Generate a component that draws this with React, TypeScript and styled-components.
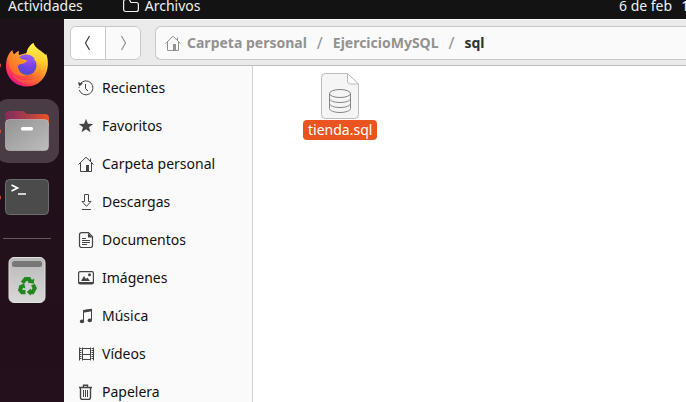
import React from "react";
import styled, { createGlobalStyle } from "styled-components";

const GlobalStyle = createGlobalStyle`
  * { box-sizing: border-box; }
  html, body, #root { height: 100%; }
  body {
    margin: 0;
    overflow: hidden;
    font-family: "Noto Sans", "Open Sans", sans-serif;
    font-size: 14px;
    line-height: 20px;
    color: #111;
  }
  button, a { font: inherit; color: inherit; text-decoration: none; }
  ul, ol { list-style: none; margin: 0; padding: 0; }
  svg { display: block; flex: none; }
`;

const Desktop = styled.div`
  display: flex;
  flex-direction: column;
  height: 100%;
  background: #210f1a;
`;

const TopBar = styled.header`
  display: flex;
  align-items: flex-end;
  flex: none;
  height: 19px;
  padding: 0 0 3px 8px;
  background: #131313;
  color: #f0f0f0;
  white-space: nowrap;
`;

const TopButton = styled.button`
  display: flex;
  align-items: center;
  gap: 6px;
  padding: 0;
  border: 0;
  background: none;
`;

const AppMenu = styled(TopButton)`
  margin-left: 40px;
`;

const Clock = styled(TopButton)`
  gap: 9px;
  width: 67px;
  margin-left: auto;
`;

const Work = styled.div`
  display: flex;
  flex: 1;
  min-height: 0;
`;

const Dock = styled.nav`
  display: flex;
  flex: none;
  width: 64px;
  padding-top: 14px;
  overflow: hidden;
  background: linear-gradient(#1e111a, #240f1c);
`;

const DockList = styled.ul`
  display: flex;
  flex-direction: column;
  gap: 2px;
  width: 64px;
  margin-left: -5px;
`;

const DockItem = styled.li`
  position: relative;
`;

const DockButton = styled.button<{ $active?: boolean }>`
  display: grid;
  place-items: center;
  width: 64px;
  height: 64px;
  padding: 0;
  border: 0;
  border-radius: 13px;
  background: ${(p) => (p.$active ? "#4a3c45" : "transparent")};
`;

const RunningDot = styled.span`
  position: absolute;
  left: 1px;
  top: 50%;
  width: 5px;
  height: 5px;
  margin-top: -2px;
  border-radius: 50%;
  background: #d9501f;
`;

const DockSeparator = styled.li`
  height: 1px;
  margin: 7px 8px;
  background: #65575f;
`;

const Window = styled.main`
  display: flex;
  flex-direction: column;
  flex: 1;
  min-width: 0;
  background: #fff;
`;

const HeaderBar = styled.div`
  display: flex;
  align-items: center;
  flex: none;
  gap: 14px;
  height: 47px;
  padding-left: 6px;
  border-top: 1px solid #fafafa;
  border-bottom: 1px solid #bdbdbd;
  background: #ebebeb;
`;

const NavGroup = styled.div`
  display: flex;
  flex: none;
  height: 34px;
  border: 1px solid #c8c8c8;
  border-radius: 6px;
  overflow: hidden;
`;

const NavButton = styled.button`
  display: grid;
  place-items: center;
  width: 34px;
  padding: 0;
  border: 0;
  background: #fff;
  color: #3d3d3d;

  & + & { width: 35px; border-left: 1px solid #c8c8c8; }
  &:disabled { background: #fafafa; color: #929292; }
`;

const PathBar = styled.nav`
  flex: 1;
  min-width: 0;
  height: 34px;
  padding-left: 9px;
  border: 1px solid #c8c8c8;
  border-right: 0;
  border-radius: 6px 0 0 6px;
  background: #fafafa;
`;

const Crumbs = styled.ol`
  display: flex;
  align-items: center;
  height: 100%;
  font-weight: 700;
  color: #929292;
  white-space: nowrap;
`;

const Crumb = styled.li`
  & + &::before {
    content: "/";
    margin: 0 10px;
    font-size: 16px;
    font-weight: 400;
    color: #929292;
  }
  display: flex;
  align-items: center;
`;

const CrumbLink = styled.a`
  display: flex;
  align-items: center;
  gap: 6px;
  &[aria-current] { color: #303030; }
`;

const Body = styled.div`
  display: flex;
  flex: 1;
  min-height: 0;
`;

const Sidebar = styled.nav`
  flex: none;
  width: 189px;
  padding-top: 3px;
  overflow: hidden;
  border-right: 1px solid #d2d2d2;
  background: #fafafa;
`;

const PlaceLink = styled.a`
  display: flex;
  align-items: center;
  gap: 8px;
  height: 38px;
  padding-left: 14px;
  & > svg { color: #444; }
`;

const Files = styled.ul`
  display: flex;
  flex: 1;
  align-items: flex-start;
  padding: 6px 0 0 50px;
  background: #fff;
`;

const FileButton = styled.button`
  display: flex;
  flex-direction: column;
  align-items: center;
  padding: 0;
  border: 0;
  background: none;
`;

const FileName = styled.span`
  padding: 0 5px;
  border-radius: 4px;
  background: #e95420;
  color: #fff;
`;

const Icon = ({ children }: { children: React.ReactNode }) => (
  <svg width="16" height="16" viewBox="0 0 16 16" fill="none" stroke="currentColor" aria-hidden="true">
    {children}
  </svg>
);

const HomeIcon = () => (
  <Icon>
    <path d="M.5 8.5 8 1.2l7.5 7.3M2.5 7v8.5h11V7M12.5 5V2.5" />
    <path d="M8 9h3v6H8z" fill="currentColor" stroke="none" />
  </Icon>
);
const RecentIcon = () => (
  <Icon>
    <path d="M2 4.2A7 7 0 1 1 1.3 10M7.5 4v4.5L10 11" />
    <path d="M0 2.2 1.2 6.5 5 3.6z" fill="currentColor" stroke="none" />
    <path d="M1 7v2" strokeDasharray="1 1" />
  </Icon>
);
const StarIcon = () => (
  <Icon>
    <path d="m8 .8 1.900 4.900 5.300.2-4.200 3.300 1.500 5L8 11.300 3.500 14.200l1.500-5L.8 5.900l5.300-.2z" fill="currentColor" stroke="none" />
  </Icon>
);
const DownloadIcon = () => (
  <Icon>
    <path d="M6.5.5h4v7H13L8.5 12.3 4 7.5h2.5zM4 15.5h9" />
  </Icon>
);
const DocumentIcon = () => (
  <Icon>
    <path d="M3.5.7h7l4 4v8.8a2 2 0 0 1-2 2h-9a2 2 0 0 1-2-2V2.7a2 2 0 0 1 2-2z" strokeWidth="1.2" />
    <path d="M10 1v4.5h4.5z" fill="currentColor" stroke="none" />
    <path d="M4 6.5h4M4 8.5h8M4 10.5h8M4 12.5h5" />
  </Icon>
);
const ImageIcon = () => (
  <Icon>
    <rect x=".6" y="1.6" width="14.8" height="12.3" rx="1.5" strokeWidth="1.2" />
    <path d="M1 12h14v2H1zM3 11l3-5 2 3 1.4-1.5L12 11z" fill="currentColor" stroke="none" />
    <circle cx="11.5" cy="4.7" r="1.5" fill="currentColor" stroke="none" />
  </Icon>
);
const MusicIcon = () => (
  <Icon>
    <path d="M5.500 13V2.600l8-1.300V12" />
    <path d="M5 2.200 14 .8v2.500L5 4.700z" fill="currentColor" stroke="none" />
    <ellipse cx="4" cy="13.400" rx="2.200" ry="1.800" fill="currentColor" stroke="none" />
    <ellipse cx="11.800" cy="12.400" rx="2.200" ry="1.800" fill="currentColor" stroke="none" />
  </Icon>
);
const VideoIcon = () => (
  <Icon>
    <path d="M2.500 2v12M14.500 2v12" strokeWidth="2" strokeDasharray="1 1" />
    <path d="M1.500 1.500v13M4.500 1.500v13M12.500 1.500v13M15.500 1.500v13" />
    <path d="M4 2.500h9M4 8.500h9M4 13.500h9" />
  </Icon>
);
const TrashIcon = () => (
  <Icon>
    <path d="M1 3.500h13M5.500 3V1.200h4V3M2.500 4v9.500a2 2 0 0 0 2 2h6a2 2 0 0 0 2-2V4" strokeWidth="1.400" />
    <path d="M5.500 6v7M7.500 6v7M9.500 6v7" />
  </Icon>
);

const FirefoxLogo = () => (
  <svg width="44" height="46" viewBox="0 0 44 46" aria-hidden="true">
    <defs>
      <linearGradient id="ffBody" x1=".85" y1=".1" x2=".25" y2=".95">
        <stop offset="0" stopColor="#fff44f" />
        <stop offset=".35" stopColor="#ffb52e" />
        <stop offset=".65" stopColor="#ff6b2b" />
        <stop offset=".85" stopColor="#ff3750" />
        <stop offset="1" stopColor="#e31587" />
      </linearGradient>
      <radialGradient id="ffGlobe" cx=".6" cy=".2" r=".8">
        <stop offset="0" stopColor="#a052eb" />
        <stop offset=".5" stopColor="#7542e5" />
        <stop offset="1" stopColor="#4b4ccc" />
      </radialGradient>
      <linearGradient id="ffTail" x1="0" y1="0" x2="0" y2="1">
        <stop offset="0" stopColor="#fff44f" />
        <stop offset=".5" stopColor="#ffd22f" />
        <stop offset="1" stopColor="#ff8a27" />
      </linearGradient>
      <linearGradient id="ffHead" x1="0" y1="1" x2="1" y2="0">
        <stop offset="0" stopColor="#ff5a36" />
        <stop offset=".6" stopColor="#ff8a27" />
        <stop offset="1" stopColor="#ffae2b" />
      </linearGradient>
    </defs>
    <path d="M4 12c1-2 2.500-3.200 3.500-4 0 2 .6 3.300 1.600 4.200C11 10.700 12 9.500 14 9c-.4 1.800-.4 3 .2 4l7.300-2C22 7 25 3 28.500 1c1 5 9 8 12 12l.6-1.500c2.800 7 2.300 16-1.200 22C36 40.500 30 44.500 22 44.500 10 44.500 1 35.500 1 24c0-5 1-9 3-12z" fill="url(#ffBody)" />
    <path d="M21.500 14C22 8 25 3 28.500 1c.5 5 7 8 10.500 14 4 7 2 15-3 20 1-7-1-14-7-18z" fill="url(#ffTail)" />
    <circle cx="22" cy="23.500" r="9.500" fill="url(#ffGlobe)" />
    <path d="M13.500 16C17 12 25 10.500 30 17l-2-.3c2 1.800 2.700 4 2.300 6-2-4-5-6.700-8.300-7.200z" fill="#9059ff" />
    <path d="M3 14c3-2 7-2 10 1 2.500 2.500 6 2 9 3.400-.3 2-3.500 3.100-6 3.600-2.800.5-3.200 1.500-3 3.500.5 4 4 7 8.500 8-7 2-16-2-17-10z" fill="url(#ffHead)" />
    <path d="M7 31c4 6 14 10 22 5 4-2.500 6-7 5.500-11 3 7-1 14-7 16S11 41 7 31z" fill="#ff7139" opacity=".45" />
  </svg>
);

const FilesLogo = () => (
  <svg width="44" height="42" viewBox="0 0 44 42" aria-hidden="true">
    <defs>
      <linearGradient id="folderBack"><stop offset="0" stopColor="#802d5c" /><stop offset=".5" stopColor="#ad3d49" /><stop offset="1" stopColor="#e95420" /></linearGradient>
      <linearGradient id="folderFront" x1="0" y1="0" x2="1" y2="1"><stop offset="0" stopColor="#939393" /><stop offset="1" stopColor="#bdbdbd" /></linearGradient>
    </defs>
    <path d="M0 16V5a4 4 0 0 1 4-4h14l4 3h18a4 4 0 0 1 4 4v8z" fill="url(#folderBack)" />
    <rect x=".5" y="9.500" width="43" height="31" rx="4" fill="url(#folderFront)" stroke="#c7c2c4" strokeOpacity=".6" />
    <rect x="16" y="17" width="12" height="3.500" rx="1.500" fill="#fff" />
  </svg>
);

const TerminalLogo = () => (
  <svg width="44" height="36" viewBox="0 0 44 36" fill="none" aria-hidden="true">
    <rect x=".5" y=".5" width="43" height="35" rx="4" fill="#4b4b4b" stroke="#6d6d6d" />
    <path d="m6.500 6 6 3-6 3M13 15h8" stroke="#fff" strokeWidth="1.700" />
  </svg>
);

const BinLogo = () => (
  <svg width="38" height="46" viewBox="0 0 38 46" fill="none" aria-hidden="true">
    <defs>
      <linearGradient id="bin" x1="0" y1="0" x2="0" y2="1"><stop offset="0" stopColor="#b9b9b9" /><stop offset="1" stopColor="#d8d8d8" /></linearGradient>
    </defs>
    <rect x="1" y=".5" width="36" height="45" rx="5" fill="url(#bin)" stroke="#e2e2e2" />
    <rect x="4" y="4" width="30" height="6" rx="2.500" fill="#777" />
    <g transform="translate(2.500 3) scale(.88)">
      <g stroke="#23851f" strokeWidth="4.600">
        <path d="m13.500 26 3.500-4.500h4l2 3.500" />
        <path d="M12.500 29.500 11 34l2 2.500h4" />
        <path d="m25.500 28 2 4-2.500 4.500h-3" />
      </g>
      <g fill="#23851f">
        <path d="m19.500 25.500 7 1.500.5-6z" />
        <path d="m9 29.500 6.500-3 1.500 6z" />
        <path d="m18.500 36.500 4.500-4v8z" />
      </g>
    </g>
  </svg>
);

const SqlFileIcon = () => (
  <svg width="38" height="48" viewBox="0 0 38 48" fill="none" aria-hidden="true">
    <path d="M5 1.500h21.500l11 10.500v30.500a4 4 0 0 1-4 4H4.500a4 4 0 0 1-4-4v-37a4 4 0 0 1 4-4z" fill="#f5f5f5" stroke="#bcbcbc" />
    <path d="M26.500 1.500V9a3 3 0 0 0 3 3h8z" fill="#fff" stroke="#bcbcbc" />
    <g stroke="#858585">
      <ellipse cx="19" cy="21.500" rx="10.500" ry="4" />
      <path d="M8.500 21.500v15c0 2.200 4.700 4 10.500 4s10.500-1.800 10.500-4v-15M8.500 26.500c0 2.200 4.700 4 10.500 4s10.500-1.800 10.500-4M8.500 31.500c0 2.200 4.700 4 10.500 4s10.500-1.800 10.500-4" />
    </g>
  </svg>
);

const places = [
  { name: "Recientes", Glyph: RecentIcon },
  { name: "Favoritos", Glyph: StarIcon },
  { name: "Carpeta personal", Glyph: HomeIcon },
  { name: "Descargas", Glyph: DownloadIcon },
  { name: "Documentos", Glyph: DocumentIcon },
  { name: "Imágenes", Glyph: ImageIcon },
  { name: "Música", Glyph: MusicIcon },
  { name: "Vídeos", Glyph: VideoIcon },
  { name: "Papelera", Glyph: TrashIcon },
];

const Chevron = ({ d }: { d: string }) => (
  <svg width="16" height="16" viewBox="0 0 16 16" fill="none" stroke="currentColor" aria-hidden="true">
    <path d={d} strokeWidth="1.200" />
  </svg>
);

export default function App() {
  return (
    <Desktop>
      <GlobalStyle />
      <TopBar>
        <TopButton>Actividades</TopButton>
        <AppMenu>
          <svg width="16" height="16" viewBox="0 0 16 16" fill="none" stroke="currentColor" aria-hidden="true">
            <path d="M.6 3.500a2 2 0 0 1 2-2h3.600L8 4.500h5.400a2 2 0 0 1 2 2v5a2 2 0 0 1-2 2H2.600a2 2 0 0 1-2-2z" strokeWidth="1.200" />
          </svg>
          Archivos
        </AppMenu>
        <Clock><span>6 de feb</span><span>1</span></Clock>
      </TopBar>
      <Work>
        <Dock aria-label="Dock">
          <DockList>
            <DockItem><DockButton aria-label="Firefox"><FirefoxLogo /></DockButton><RunningDot /></DockItem>
            <DockItem><DockButton $active aria-label="Archivos"><FilesLogo /></DockButton><RunningDot /></DockItem>
            <DockItem><DockButton aria-label="Terminal"><TerminalLogo /></DockButton><RunningDot /></DockItem>
            <DockSeparator role="separator" />
            <DockItem><DockButton aria-label="Papelera"><BinLogo /></DockButton></DockItem>
          </DockList>
        </Dock>
        <Window>
          <HeaderBar>
            <NavGroup>
              <NavButton aria-label="Atrás"><Chevron d="M9.500 1 5.500 8l4 7" /></NavButton>
              <NavButton aria-label="Adelante" disabled><Chevron d="m6.500 1 4 7-4 7" /></NavButton>
            </NavGroup>
            <PathBar aria-label="Ruta">
              <Crumbs>
                <Crumb><CrumbLink href="#home"><HomeIcon />Carpeta personal</CrumbLink></Crumb>
                <Crumb><CrumbLink href="#ejercicio">EjercicioMySQL</CrumbLink></Crumb>
                <Crumb><CrumbLink href="#sql" aria-current="page">sql</CrumbLink></Crumb>
              </Crumbs>
            </PathBar>
          </HeaderBar>
          <Body>
            <Sidebar aria-label="Lugares">
              <ul>
                {places.map(({ name, Glyph }) => (
                  <li key={name}><PlaceLink href={`#${name}`}><Glyph />{name}</PlaceLink></li>
                ))}
              </ul>
            </Sidebar>
            <Files>
              <li><FileButton><SqlFileIcon /><FileName>tienda.sql</FileName></FileButton></li>
            </Files>
          </Body>
        </Window>
      </Work>
    </Desktop>
  );
}
